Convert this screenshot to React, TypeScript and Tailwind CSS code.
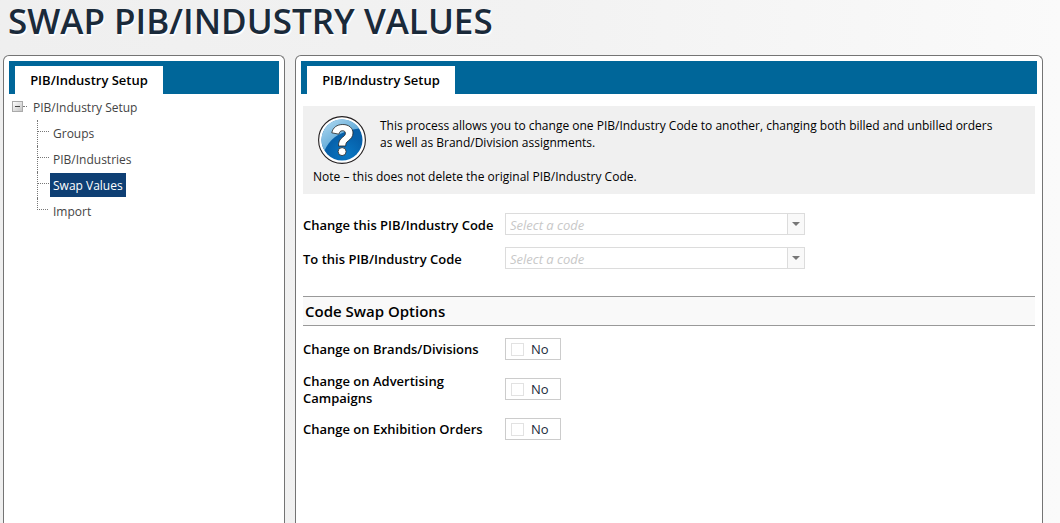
import { useState, type ReactNode } from "react";

function Panel({ title, className, children }: { title: string; className: string; children: ReactNode }) {
  return (
    <section className={`rounded-t-md border border-b-0 border-[#747474] bg-white px-[5px] pt-[5px] ${className}`}>
      <div className="flex h-[33px] items-end bg-[#006699] pl-1.5">
        <h2 className="flex h-7 w-[148px] items-center justify-center bg-white text-[13px] font-semibold text-black">{title}</h2>
      </div>
      {children}
    </section>
  );
}

function TreeItem({ label, selected = false, last = false }: { label: string; selected?: boolean; last?: boolean }) {
  return (
    <li className="flex h-[26px] items-center">
      <span className={`flex w-[13px] flex-col self-stretch ${last ? "" : "border-l border-dotted border-[#777]"}`}>
        <span className={`h-3 w-[11px] border-b border-dotted border-[#777] ${last ? "border-l" : ""}`} />
      </span>
      <a href="#" className={`flex h-6 items-center px-[3px] ${selected ? "bg-[#0e3f74] text-white" : ""}`}>
        {label}
      </a>
    </li>
  );
}

function HelpIcon() {
  return (
    <svg viewBox="0 0 48 48" className="size-12 shrink-0" aria-hidden="true">
      <defs>
        <radialGradient id="ball" cx="0.6" cy="0.85" r="0.9">
          <stop offset="0" stopColor="#0a78c4" />
          <stop offset="0.5" stopColor="#0661ab" />
          <stop offset="1" stopColor="#0a5ba0" />
        </radialGradient>
        <linearGradient id="gloss" x1="0" y1="0" x2="0.8" y2="1">
          <stop offset="0" stopColor="#b5dcf2" />
          <stop offset="1" stopColor="#3b93cc" />
        </linearGradient>
      </defs>
      <circle cx="24" cy="24" r="23.4" fill="#fff" stroke="#231f20" strokeWidth="1.1" />
      <circle cx="24" cy="24" r="20.5" fill="url(#ball)" />
      <path d="M3.7 27A20.5 20.5 0 0 1 41 12.5C33 13.5 24 16 17 21C12 25 9 29 6.5 34.5A20.5 20.5 0 0 1 3.7 27Z" fill="url(#gloss)" />
      <path
        d="M13.8 16.8C14.800 11.500 19 8.500 24.800 8.500C30.800 8.500 35 12 35 17C35 20.500 33 22.900 30.200 24.900C28.200 26.400 27.700 27.400 27.700 30H20.500C20.400 26 21.500 23.600 24.500 21.300C26.500 19.800 27.400 18.900 27.400 17.200C27.400 15.600 26.300 14.700 24.500 14.700C22.500 14.700 21.400 15.900 20.900 18.200Z"
        fill="#fff"
        stroke="#222"
        strokeWidth="0.8"
      />
      <circle cx="24.1" cy="35.6" r="4" fill="#fff" stroke="#222" strokeWidth="0.8" />
    </svg>
  );
}

function CodeSelect({ id, label }: { id: string; label: string }) {
  return (
    <div className="flex items-center">
      <label htmlFor={id} className="w-[202px] pt-0.5 text-[13px] font-semibold">{label}</label>
      <div className="relative w-[300px]">
        <select id={id} className="block h-[22px] w-full appearance-none border border-[#dcdcdc] bg-white pt-px pl-1 text-[13px] leading-5 text-[#c8c8c8] italic">
          <option>Select a code</option>
        </select>
        <span className="pointer-events-none absolute inset-y-px right-px flex w-[17px] items-center justify-center border-l border-[#dcdcdc] bg-[#f9f9f9]">
          <svg viewBox="0 0 8 4" className="h-1 w-2" aria-hidden="true">
            <path d="M0 0H8L4 4Z" fill="#777" />
          </svg>
        </span>
      </div>
    </div>
  );
}

function Toggle({ id, label }: { id: string; label: string }) {
  const [on, setOn] = useState(false);
  return (
    <div className="flex h-10 items-center">
      <label htmlFor={id} className="w-[202px] pt-px pr-5 text-[13px] font-semibold">{label}</label>
      <label className="flex h-[22px] w-14 items-center gap-[7px] border border-[#ccc] bg-white pl-[5px] text-[13px] text-[#1a2a3a]">
        <input
          id={id}
          type="checkbox"
          checked={on}
          onChange={(e) => setOn(e.target.checked)}
          className="size-[13px] appearance-none border border-[#e2e2e2] bg-white checked:bg-[#006699]"
        />
        {on ? "Yes" : "No"}
      </label>
    </div>
  );
}

export default function App() {
  return (
    <div className="flex min-h-screen flex-col bg-linear-to-r from-[#efefef] via-[#f2f2f2] to-[#fafafa] font-['Open_Sans','Noto_Sans',sans-serif] text-xs leading-[17px] text-black">
      <h1 className="h-[55px] pl-2 text-[35px] leading-[42px] font-semibold whitespace-nowrap text-[#1a2a3a] [text-shadow:1px_2px_1px_white]">
        SWAP PIB/INDUSTRY VALUES
      </h1>
      <main className="flex flex-1 gap-2.5 pr-[17px] pl-[3px]">
        <Panel title="PIB/Industry Setup" className="w-[282px] shrink-0">
          <nav className="pt-0.5 pl-[3px] text-[#444]">
            <div className="flex h-6 items-center pb-1">
              <button type="button" aria-label="Collapse" className="flex size-[11px] items-center justify-center border border-[#aaa] bg-linear-to-br from-white to-[#c4c4c4]">
                <span className="h-px w-[5px] bg-[#444]" />
              </button>
              <span className="w-1 border-b border-dotted border-[#777]" />
              <a href="#" className="pt-0.5 pl-1.5">PIB/Industry Setup</a>
            </div>
            <ul className="pl-[25px]">
              <TreeItem label="Groups" />
              <TreeItem label="PIB/Industries" />
              <TreeItem label="Swap Values" selected />
              <TreeItem label="Import" last />
            </ul>
          </nav>
        </Panel>
        <Panel title="PIB/Industry Setup" className="min-w-0 flex-1">
          <div className="px-0.5 pt-3">
            <div className="h-[88px] bg-[#f0f0f0] px-2.5 pt-2.5">
              <div className="flex gap-3.5 pl-[5px]">
                <HelpIcon />
                <p className="pt-px">
                  This process allows you to change one PIB/Industry Code to another, changing both billed and unbilled orders
                  <br />
                  as well as Brand/Division assignments.
                </p>
              </div>
              <p className="pt-1">Note – this does not delete the original PIB/Industry Code.</p>
            </div>
            <div className="flex flex-col gap-3 pt-[19px]">
              <CodeSelect id="from-code" label="Change this PIB/Industry Code" />
              <CodeSelect id="to-code" label="To this PIB/Industry Code" />
            </div>
            <h3 className="mt-[27px] flex h-[30px] items-center border-y border-[#999] bg-[#f9f9f9] pl-0.5 text-[15px] font-semibold">
              Code Swap Options
            </h3>
            <div className="pt-[3px]">
              <Toggle id="brands" label="Change on Brands/Divisions" />
              <Toggle id="campaigns" label="Change on Advertising Campaigns" />
              <Toggle id="exhibition" label="Change on Exhibition Orders" />
            </div>
          </div>
        </Panel>
      </main>
    </div>
  );
}
